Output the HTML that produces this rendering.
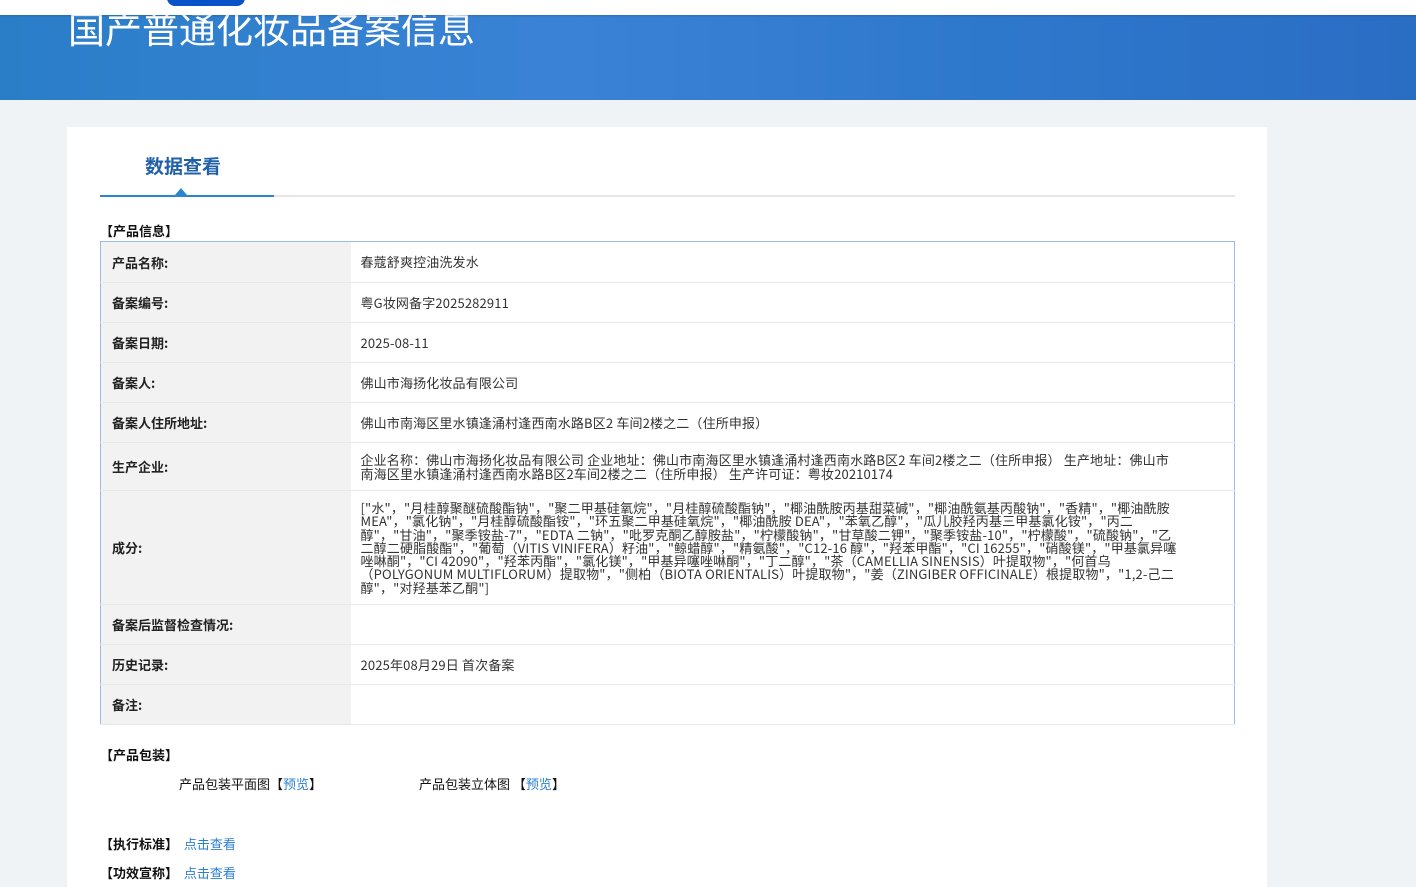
<!DOCTYPE html>
<html><head><meta charset="utf-8">
<style>
*{margin:0;padding:0;box-sizing:border-box}
body{width:1416px;height:884px;overflow:hidden;background:#eff3f6;font-family:"Noto Sans CJK SC","Liberation Sans",sans-serif;color:#333;font-size:13px;position:relative}
.top{position:absolute;left:0;top:0;width:1416px;height:15px;background:#fff;box-shadow:0 1px 2px rgba(0,0,0,.15);z-index:2}
.pill{position:absolute;left:167px;top:-10px;width:78px;height:16px;background:#0a52c8;border-radius:8px}
.banner{position:absolute;left:0;top:15px;width:1416px;height:85px;background:linear-gradient(90deg,#2a7ec8 0%,#3a82d6 40%,#2e78cc 70%,#2a6ec4 100%);overflow:hidden}
.banner h1{position:absolute;left:68px;top:-15px;font-size:37px;font-weight:normal;color:#fff;letter-spacing:0}
.card{position:absolute;left:67px;top:127px;width:1200px;height:760px;background:#fff}
.tab{position:absolute;left:145px;top:152px;font-size:19px;font-weight:bold;color:#2060a8}
.gline{position:absolute;left:100px;top:195px;width:1135px;height:2px;background:#e6e6e6}
.bline{position:absolute;left:100px;top:195px;width:174px;height:2px;background:#2b86d2}
.tri{position:absolute;left:175px;top:188px;width:0;height:0;border-left:6px solid transparent;border-right:6px solid transparent;border-bottom:7px solid #2b86d2}
.sec{position:absolute;font-weight:bold;color:#111;font-size:13px;line-height:18px}
table{position:absolute;left:100px;top:241px;width:1135px;border-collapse:collapse;border:1px solid #9bbbe4}
td{border-bottom:1px solid #e8e8e8;vertical-align:middle;font-size:13px}
td.l{width:250px;background:#f2f2f2;font-weight:bold;color:#222;padding-left:11px}
td.v{padding:0 55px 0 10px;color:#333;line-height:13.3px;letter-spacing:0.15px}
a{color:#2b7fd0;text-decoration:none;font-weight:normal}
.t{position:absolute;font-size:13px;color:#111;line-height:18px}
</style></head><body>
<div class="top"><div class="pill"></div></div>
<div class="banner"><h1>国产普通化妆品备案信息</h1></div>
<div class="card"></div>
<div class="tab">数据查看</div>
<div class="gline"></div><div class="bline"></div><div class="tri"></div>
<div class="sec" style="left:100px;top:222px">【产品信息】</div>
<table>
<tr style="height:41px"><td class="l">产品名称:</td><td class="v">春蔻舒爽控油洗发水</td></tr>
<tr style="height:40px"><td class="l">备案编号:</td><td class="v">粤G妆网备字2025282911</td></tr>
<tr style="height:40px"><td class="l">备案日期:</td><td class="v">2025-08-11</td></tr>
<tr style="height:40px"><td class="l">备案人:</td><td class="v">佛山市海扬化妆品有限公司</td></tr>
<tr style="height:40px"><td class="l">备案人住所地址:</td><td class="v">佛山市南海区里水镇逢涌村逢西南水路B区2 车间2楼之二（住所申报）</td></tr>
<tr style="height:48px"><td class="l">生产企业:</td><td class="v">企业名称：佛山市海扬化妆品有限公司 企业地址：佛山市南海区里水镇逢涌村逢西南水路B区2 车间2楼之二（住所申报） 生产地址：佛山市南海区里水镇逢涌村逢西南水路B区2车间2楼之二（住所申报） 生产许可证：粤妆20210174</td></tr>
<tr style="height:114px"><td class="l">成分:</td><td class="v">["水"，"月桂醇聚醚硫酸酯钠"，"聚二甲基硅氧烷"，"月桂醇硫酸酯钠"，"椰油酰胺丙基甜菜碱"，"椰油酰氨基丙酸钠"，"香精"，"椰油酰胺 MEA"，"氯化钠"，"月桂醇硫酸酯铵"，"环五聚二甲基硅氧烷"，"椰油酰胺 DEA"，"苯氧乙醇"，"瓜儿胶羟丙基三甲基氯化铵"，"丙二醇"，"甘油"，"聚季铵盐-7"，"EDTA 二钠"，"吡罗克酮乙醇胺盐"，"柠檬酸钠"，"甘草酸二钾"，"聚季铵盐-10"，"柠檬酸"，"硫酸钠"，"乙二醇二硬脂酸酯"，"葡萄（VITIS VINIFERA）籽油"，"鲸蜡醇"，"精氨酸"，"C12-16 醇"，"羟苯甲酯"，"CI 16255"，"硝酸镁"，"甲基氯异噻唑啉酮"，"CI 42090"，"羟苯丙酯"，"氯化镁"，"甲基异噻唑啉酮"，"丁二醇"，"茶（CAMELLIA SINENSIS）叶提取物"，"何首乌（POLYGONUM MULTIFLORUM）提取物"，"侧柏（BIOTA ORIENTALIS）叶提取物"，"姜（ZINGIBER OFFICINALE）根提取物"，"1,2-己二醇"，"对羟基苯乙酮"]</td></tr>
<tr style="height:40px"><td class="l">备案后监督检查情况:</td><td class="v"></td></tr>
<tr style="height:40px"><td class="l">历史记录:</td><td class="v">2025年08月29日 首次备案</td></tr>
<tr style="height:40px"><td class="l">备注:</td><td class="v"></td></tr>
</table>
<div class="sec" style="left:100px;top:746px">【产品包装】</div>
<div class="t" style="left:179px;top:775px">产品包装平面图【<a>预览</a>】</div>
<div class="t" style="left:419px;top:775px">产品包装立体图 【<a>预览</a>】</div>
<div class="sec" style="left:100px;top:835px">【执行标准】&nbsp; <a>点击查看</a></div>
<div class="sec" style="left:100px;top:864px">【功效宣称】&nbsp; <a>点击查看</a></div>
</body></html>
